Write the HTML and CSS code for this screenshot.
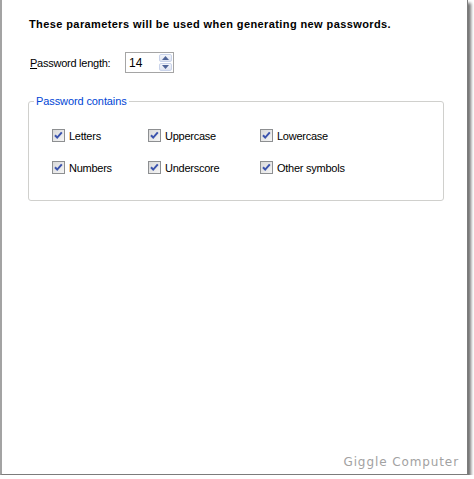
FILE: index.html
```html
<!DOCTYPE html>
<html>
<head>
<meta charset="utf-8">
<link rel="stylesheet" href="styles.css">
</head>
<body>
<div class="window">
  <div class="content">
    <p class="intro">These parameters will be used when generating new passwords.</p>
    <div class="length-row">
      <label class="length-label"><u>P</u>assword length:</label>
      <div class="spinner">
        <span class="spin-value">14</span>
        <div class="spin-buttons">
          <span class="spin-btn"><svg width="7" height="4" viewBox="0 0 7 4"><path d="M0 4 L3.5 0 L7 4 Z" fill="#4f6498"/></svg></span>
          <span class="spin-btn"><svg width="7" height="4" viewBox="0 0 7 4"><path d="M0 0 L3.5 4 L7 0 Z" fill="#4f6498"/></svg></span>
        </div>
      </div>
    </div>
    <fieldset class="group">
      <legend class="group-title">Password contains</legend>
      <div class="checks">
        <div class="check"><span class="box"><svg width="13" height="13" viewBox="0 0 13 13"><rect x="0.5" y="0.5" width="12" height="12" fill="url(#g)" stroke="#8d8f91"/><path d="M3 6.2 L5.2 8.6 L9.8 3.4" fill="none" stroke="#3b53ad" stroke-width="2"/></svg></span>Letters</div>
        <div class="check"><span class="box"><svg width="13" height="13" viewBox="0 0 13 13"><rect x="0.5" y="0.5" width="12" height="12" fill="url(#g)" stroke="#8d8f91"/><path d="M3 6.2 L5.2 8.6 L9.8 3.4" fill="none" stroke="#3b53ad" stroke-width="2"/></svg></span>Uppercase</div>
        <div class="check"><span class="box"><svg width="13" height="13" viewBox="0 0 13 13"><rect x="0.5" y="0.5" width="12" height="12" fill="url(#g)" stroke="#8d8f91"/><path d="M3 6.2 L5.2 8.6 L9.8 3.4" fill="none" stroke="#3b53ad" stroke-width="2"/></svg></span>Lowercase</div>
        <div class="check"><span class="box"><svg width="13" height="13" viewBox="0 0 13 13"><rect x="0.5" y="0.5" width="12" height="12" fill="url(#g)" stroke="#8d8f91"/><path d="M3 6.2 L5.2 8.6 L9.8 3.4" fill="none" stroke="#3b53ad" stroke-width="2"/></svg></span>Numbers</div>
        <div class="check"><span class="box"><svg width="13" height="13" viewBox="0 0 13 13"><rect x="0.5" y="0.5" width="12" height="12" fill="url(#g)" stroke="#8d8f91"/><path d="M3 6.2 L5.2 8.6 L9.8 3.4" fill="none" stroke="#3b53ad" stroke-width="2"/></svg></span>Underscore</div>
        <div class="check"><span class="box"><svg width="13" height="13" viewBox="0 0 13 13"><rect x="0.5" y="0.5" width="12" height="12" fill="url(#g)" stroke="#8d8f91"/><path d="M3 6.2 L5.2 8.6 L9.8 3.4" fill="none" stroke="#3b53ad" stroke-width="2"/></svg></span>Other symbols</div>
      </div>
    </fieldset>
    <svg class="defs" width="0" height="0"><defs><linearGradient id="g" x1="0" y1="0" x2="1" y2="1"><stop offset="0" stop-color="#d8d8d8"/><stop offset="1" stop-color="#f6f6f6"/></linearGradient></defs></svg>
  </div>
  <div class="watermark">Giggle Computer</div>
</div>
</body>
</html>
```

FILE: styles.css
```css
html, body {
  margin: 0;
  padding: 0;
  background: #fff;
}
body {
  font-family: "Liberation Sans", Arial, sans-serif;
  font-size: 11px;
  color: #000;
}
.window {
  box-sizing: border-box;
  width: 468px;
  height: 475px;
  border-left: 2px solid #a3a3a3;
  border-right: 1px solid #7c7c7c;
  border-bottom: 1px solid #7c7c7c;
  box-shadow: 3px 3px 3px rgba(0, 0, 0, 0.55);
  display: flex;
  flex-direction: column;
  background: #fff;
}
.content {
  flex: 1;
  padding: 18px 0 0 27px;
}
.intro {
  margin: 0;
  font-weight: bold;
  line-height: 13px;
  letter-spacing: 0.4px;
}
.length-row {
  display: flex;
  align-items: center;
  margin-top: 21px;
  letter-spacing: -0.25px;
}
.length-label {
  width: 95px;
  margin-left: 1px;
}
.length-label u {
  text-decoration: underline;
}
.spinner {
  box-sizing: border-box;
  width: 49px;
  height: 21px;
  border: 1px solid #a5a5a5;
  display: flex;
  align-items: center;
  justify-content: space-between;
  padding: 0 1px 0 3px;
  font-size: 12px;
  letter-spacing: 0;
}
.spin-buttons {
  display: flex;
  flex-direction: column;
  gap: 1px;
}
.spin-btn {
  box-sizing: border-box;
  width: 13px;
  height: 8px;
  border: 1px solid #c9d3ea;
  border-radius: 2px;
  background: linear-gradient(#f4f6fb, #dfe4f1);
  display: flex;
  align-items: center;
  justify-content: center;
}
.spin-btn svg {
  display: block;
}
.group {
  box-sizing: border-box;
  width: 416px;
  height: 106px;
  margin: 22px 0 0 -1px;
  padding: 0 0 0 5px;
  border: 1px solid #d0d0cd;
  border-radius: 3px;
  min-width: 0;
}
.group-title {
  color: #0046d5;
  padding: 0 2px;
  line-height: 13px;
  letter-spacing: -0.1px;
}
.checks {
  display: grid;
  grid-template-columns: 96px 112px auto;
  row-gap: 19px;
  margin: 21px 0 0 18px;
  letter-spacing: -0.25px;
}
.check {
  display: flex;
  align-items: center;
  height: 13px;
  white-space: nowrap;
}
.box {
  width: 13px;
  height: 13px;
  margin-right: 4px;
  flex: none;
}
.box svg {
  display: block;
}
.defs {
  position: absolute;
}
.watermark {
  align-self: flex-end;
  margin: 0 8px 5px 0;
  font-family: "DejaVu Sans", sans-serif;
  font-size: 12px;
  letter-spacing: 0.9px;
  color: #a2a2a2;
}
```
